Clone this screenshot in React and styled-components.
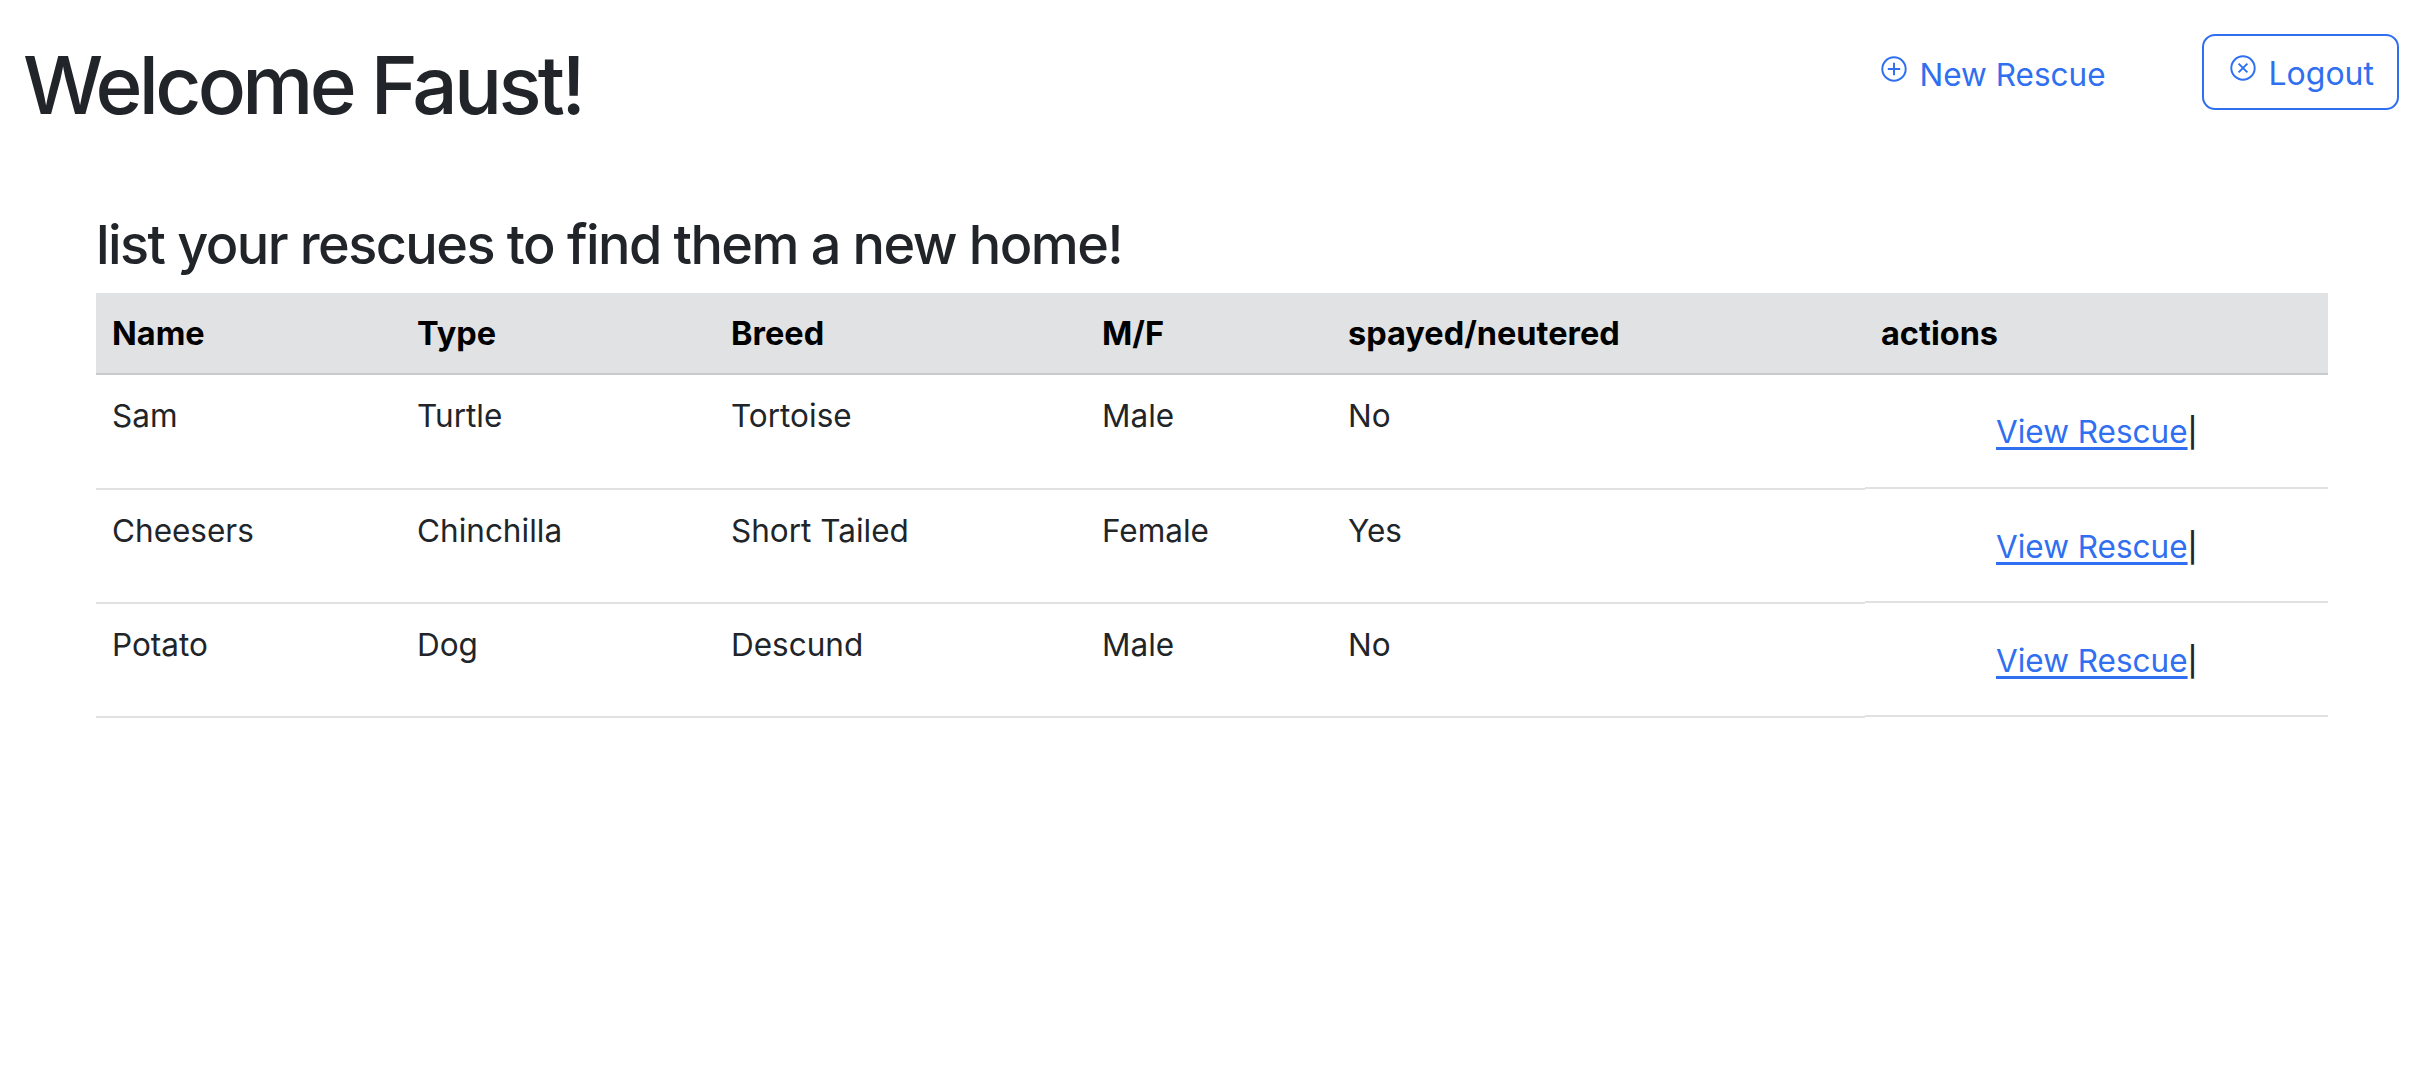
import React from "react";
import styled, { createGlobalStyle } from "styled-components";

const Global = createGlobalStyle`
  html, body { margin: 0; padding: 0; background: #fff; }
  body { font-family: Inter, "Liberation Sans", sans-serif; color: #212529; }
`;

const Page = styled.div`
  width: 2432px;
  height: 1082px;
  overflow: hidden;
`;

const Header = styled.header`
  display: flex;
  align-items: flex-start;
  justify-content: space-between;
  height: 211px;
  padding: 34px 33px 0 23px;
  box-sizing: border-box;
`;

const Title = styled.h1`
  margin: 3px 0 0;
  font-size: 80px;
  line-height: 96px;
  font-weight: 500;
  letter-spacing: -3.7px;
`;

const Nav = styled.nav`
  display: flex;
  align-items: center;
`;

const NavLink = styled.a`
  display: flex;
  align-items: center;
  gap: 13px;
  color: #2f6ff0;
  font-size: ${(p) => (p.$outlined ? "32px" : "31.5px")};
  line-height: 48px;
  height: 76px;
  box-sizing: border-box;
  padding: ${(p) => (p.$outlined ? "3px 23px 0 26px" : "5px 24px 0")};
  border: ${(p) => (p.$outlined ? "2px solid #2f6ff0" : "2px solid transparent")};
  border-radius: 13px;
  margin-left: ${(p) => (p.$outlined ? "70px" : "0")};
  text-decoration: none;
`;

const Glyph = styled.svg`
  width: 26px;
  height: 26px;
  margin-top: -11px;
  fill: none;
  stroke: currentColor;
  stroke-width: 1.2;
`;

const Content = styled.main`
  padding: 0 104px 0 96px;
`;

const Subtitle = styled.h2`
  margin: 0 0 14px 0;
  font-size: 54px;
  line-height: 68px;
  font-weight: 500;
  letter-spacing: -1.57px;
`;

const Table = styled.table`
  width: 2232px;
  border-collapse: separate;
  border-spacing: 0;
  table-layout: fixed;
  font-size: 31.5px;
  color: #212529;
`;

const Th = styled.th`
  height: 82px;
  box-sizing: border-box;
  padding: 0 16px;
  text-align: left;
  font-weight: 700;
  font-size: 32.5px;
  color: #000;
  background: #e1e2e4;
  border-bottom: 2px solid #c9cacc;
`;

const Td = styled.td`
  height: 114px;
  padding: 18px 16px 0;
  vertical-align: top;
  line-height: 46px;
  border-bottom: 2px solid #dfe1e3;
  box-sizing: border-box;
  tr:first-child > & {
    height: 115px;
  }
`;

const ActionTd = styled(Td)`
  padding-top: 34px;
  padding-left: 131px;
  white-space: nowrap;
  border-bottom: 1px solid #fff;
  box-shadow: inset 0 -2px 0 #dfe1e3;
`;

const ViewLink = styled.a`
  color: #2f6ff0;
  text-decoration: underline;
  text-underline-offset: 4px;
  font-size: 31.5px;
`;

const Sep = styled.span`
  color: #212529;
  font-size: 29px;
  font-weight: 500;
`;

const rows = [
  ["Sam", "Turtle", "Tortoise", "Male", "No"],
  ["Cheesers", "Chinchilla", "Short Tailed", "Female", "Yes"],
  ["Potato", "Dog", "Descund", "Male", "No"],
];

const widths = [305, 314, 371, 246, 533, 463];
const heads = ["Name", "Type", "Breed", "M/F", "spayed/neutered", "actions"];

export default function App() {
  return (
    <Page>
      <Global />
      <Header>
        <Title>Welcome Faust!</Title>
        <Nav>
          <NavLink href="#">
            <Glyph viewBox="0 0 16 16">
              <circle cx="8" cy="8" r="7.2" />
              <path d="M8 4.2v7.6M4.2 8h7.6" />
            </Glyph>
            New Rescue
          </NavLink>
          <NavLink href="#" $outlined>
            <Glyph viewBox="0 0 16 16">
              <circle cx="8" cy="8" r="7.2" />
              <path d="M5.3 5.3l5.4 5.4M10.7 5.3l-5.4 5.4" />
            </Glyph>
            Logout
          </NavLink>
        </Nav>
      </Header>
      <Content>
        <Subtitle>list your rescues to find them a new home!</Subtitle>
        <Table>
          <colgroup>
            {widths.map((w, i) => (
              <col key={i} style={{ width: w }} />
            ))}
          </colgroup>
          <thead>
            <tr>
              {heads.map((h) => (
                <Th key={h}>{h}</Th>
              ))}
            </tr>
          </thead>
          <tbody>
            {rows.map((r) => (
              <tr key={r[0]}>
                {r.map((c, i) => (
                  <Td key={i}>{c}</Td>
                ))}
                <ActionTd>
                  <ViewLink href="#">View Rescue</ViewLink>
                  <Sep>|</Sep>
                </ActionTd>
              </tr>
            ))}
          </tbody>
        </Table>
      </Content>
    </Page>
  );
}
